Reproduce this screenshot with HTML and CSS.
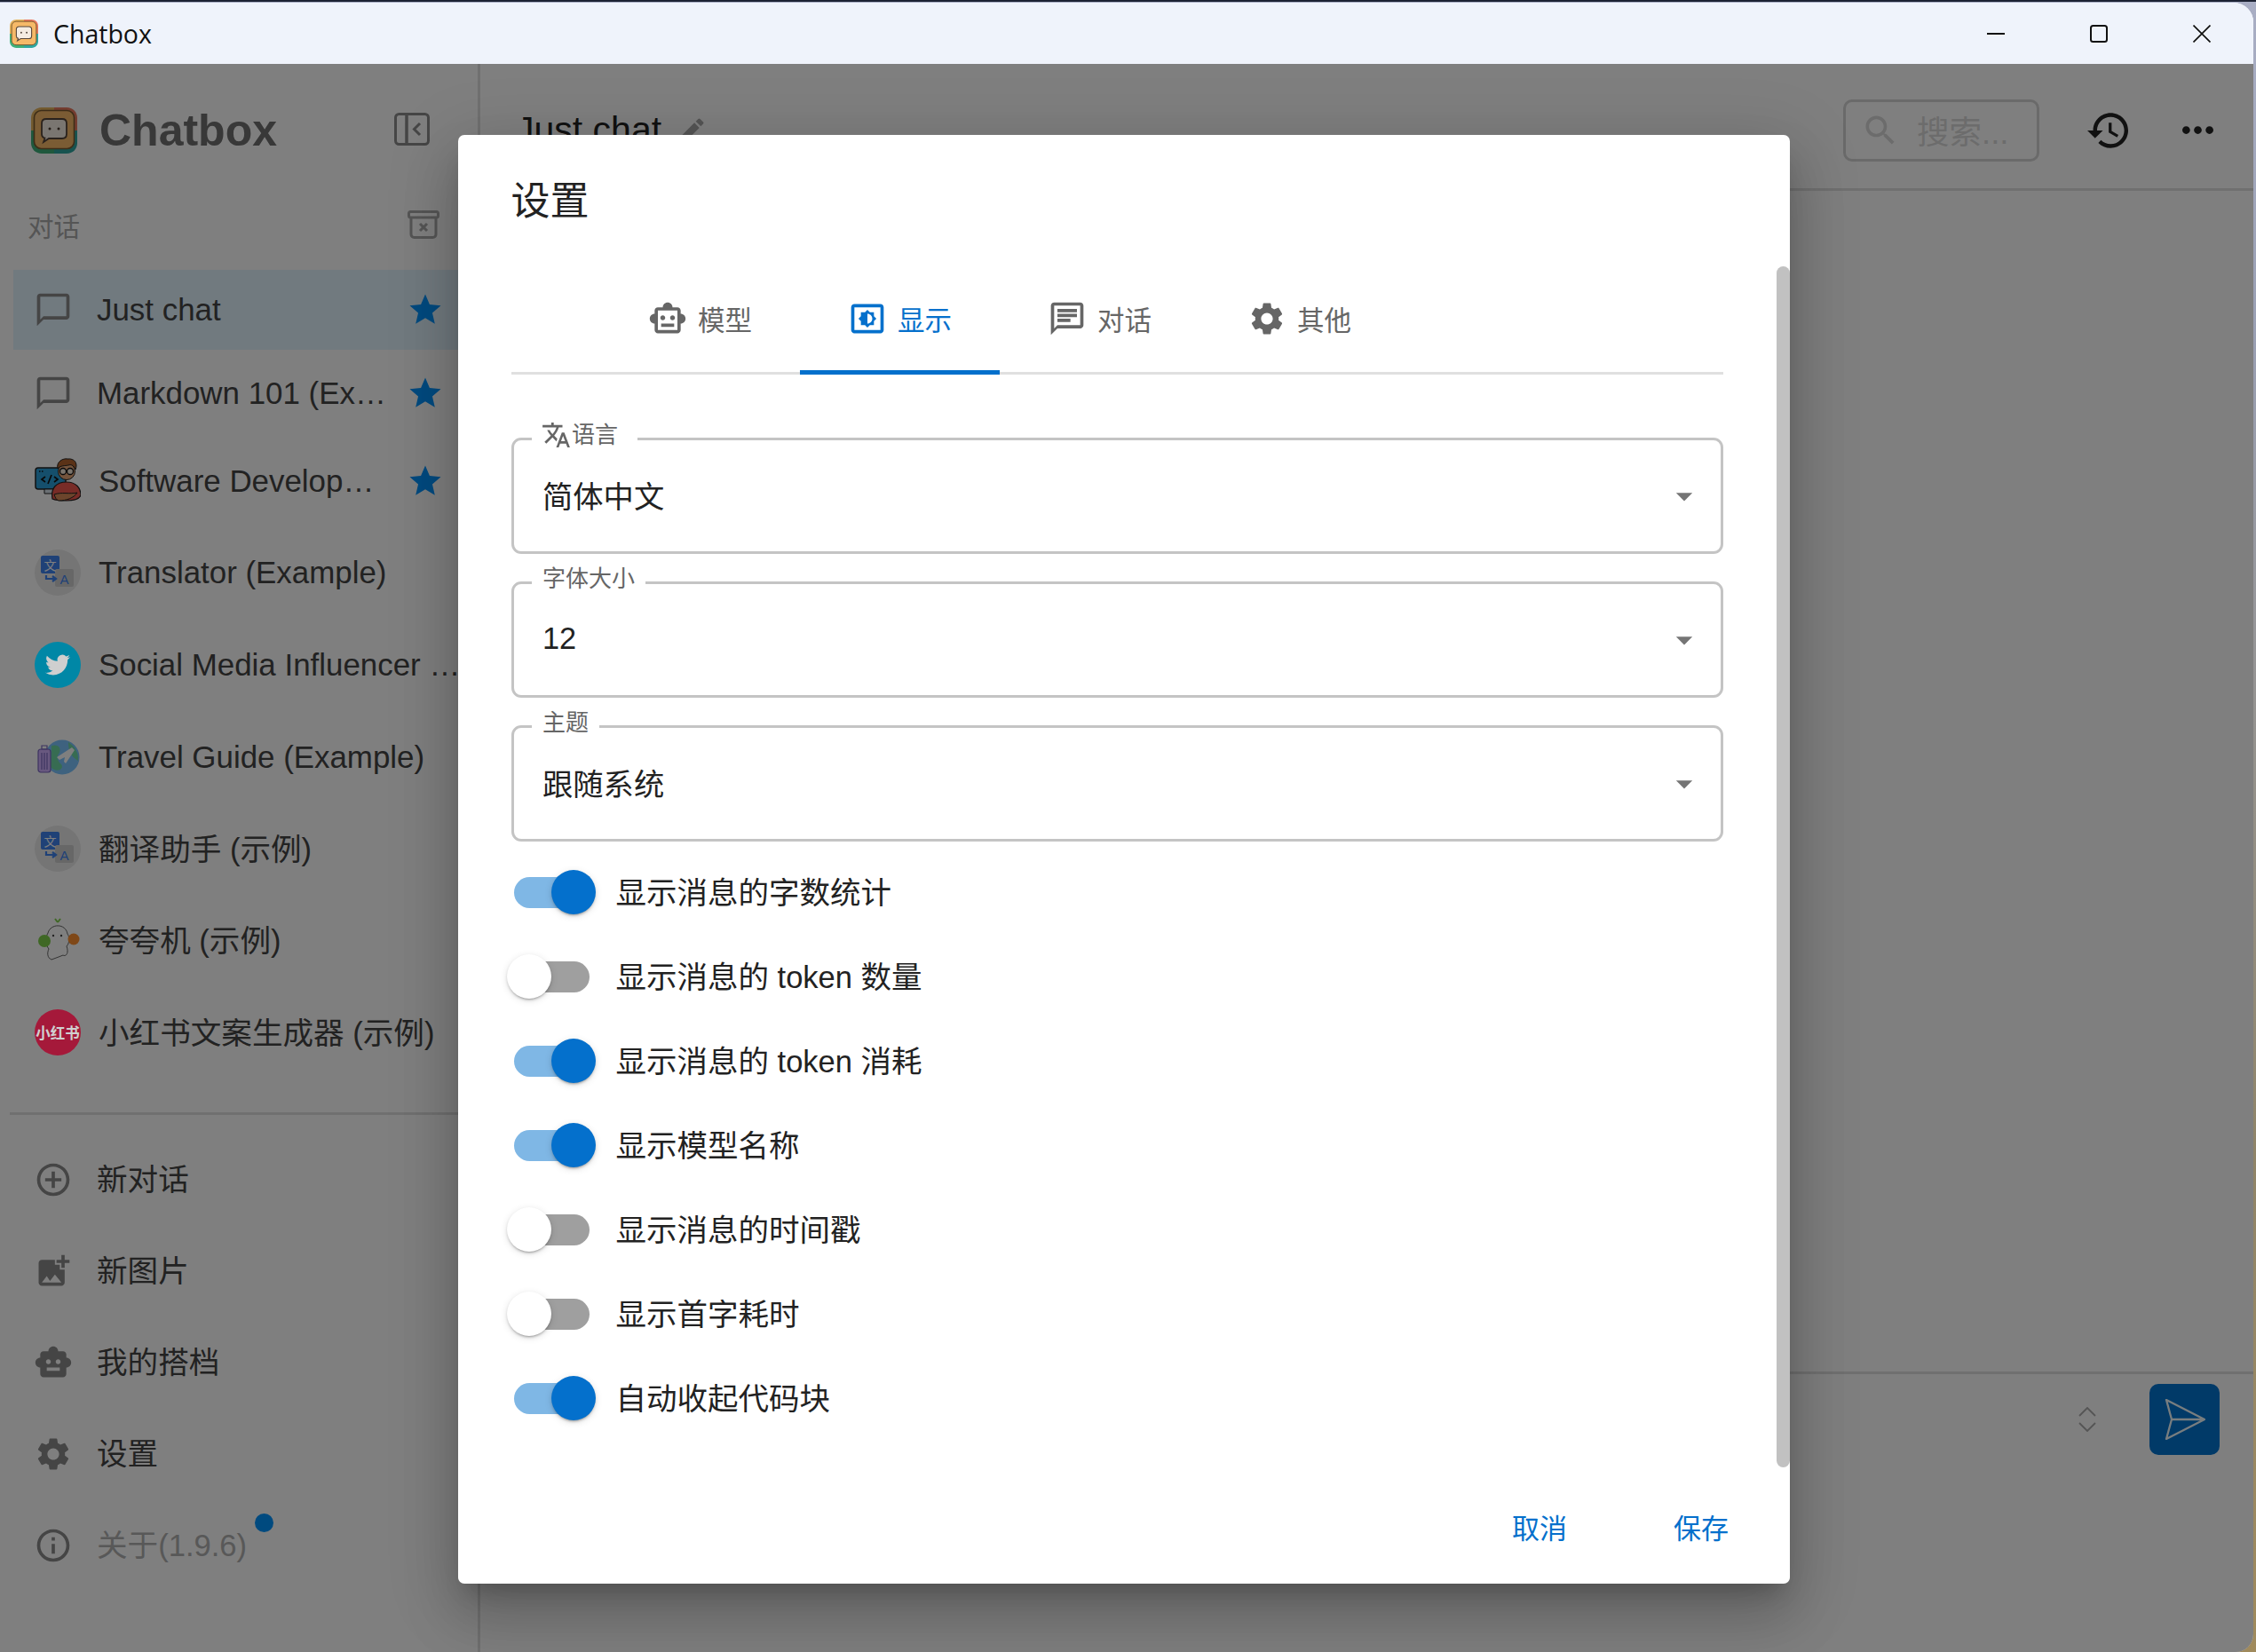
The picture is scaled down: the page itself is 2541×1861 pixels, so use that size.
FILE: index.html
```html
<!DOCTYPE html>
<html lang="zh-CN">
<head>
<meta charset="utf-8">
<title>Chatbox</title>
<link rel="stylesheet" href="styles.css">
</head>
<body>
<svg class="defs" width="0" height="0" aria-hidden="true">
  <symbol id="i-logo" viewBox="0 0 52 52">
    <path d="M26 0H12C5 0 0 5 0 12V26H26Z" fill="#e6b45e"/>
    <path d="M26 0H40C47 0 52 5 52 12V26H26Z" fill="#e8785f"/>
    <path d="M26 52H12C5 52 0 47 0 40V26H26Z" fill="#3fb07a"/>
    <path d="M26 52H40C47 52 52 47 52 40V26H26Z" fill="#2fa7a0"/>
    <rect x="3.500" y="3.500" width="45" height="43" rx="8" fill="#f6b968" stroke="#7a5a30" stroke-width="1.600"/>
    <path d="M17 13H35C38 13 40 15 40 18V30C40 33 38 35 35 35H20L14 39L15.500 34.500C13.500 34 12 32.500 12 30V18C12 15 14 13 17 13Z" fill="#f5ece2" stroke="#55453a" stroke-width="1.800"/>
    <circle cx="21" cy="24" r="1.500" fill="#4a3c32"/><circle cx="31" cy="24" r="1.500" fill="#4a3c32"/>
  </symbol>
  <symbol id="i-chat" viewBox="0 0 24 24"><path d="M20 2H4c-1.100 0-2 .9-2 2v18l4-4h14c1.100 0 2-.9 2-2V4c0-1.100-.9-2-2-2zm0 14H6l-2 2V4h16v12z"/></symbol>
  <symbol id="i-star" viewBox="0 0 24 24"><path d="M12 17.270L18.180 21l-1.640-7.030L22 9.240l-7.190-.61L12 2 9.190 8.630 2 9.240l5.460 4.730L5.820 21z"/></symbol>
  <symbol id="i-robot" viewBox="0 0 24 24"><path d="M20 9V7c0-1.100-.9-2-2-2h-3c0-1.660-1.340-3-3-3S9 3.340 9 5H6c-1.100 0-2 .9-2 2v2c-1.660 0-3 1.340-3 3s1.340 3 3 3v4c0 1.100.9 2 2 2h12c1.100 0 2-.9 2-2v-4c1.660 0 3-1.340 3-3s-1.340-3-3-3zM7.500 11.500c0-.83.67-1.500 1.500-1.500s1.500.67 1.500 1.500S9.830 13 9 13s-1.500-.67-1.500-1.500zM16 17H8v-2h8v2zm-1-4c-.83 0-1.500-.67-1.500-1.500S14.170 10 15 10s1.500.67 1.500 1.500S15.830 13 15 13z"/></symbol>
  <symbol id="i-gear" viewBox="0 0 24 24"><path d="M19.140 12.940c.04-.3.06-.61.06-.94 0-.32-.02-.64-.07-.94l2.030-1.580c.18-.14.23-.41.12-.61l-1.920-3.320c-.12-.22-.37-.29-.59-.22l-2.390.96c-.5-.38-1.030-.7-1.620-.94l-.36-2.540c-.04-.24-.24-.41-.48-.41h-3.840c-.24 0-.43.17-.47.41l-.36 2.540c-.59.24-1.130.57-1.620.94l-2.390-.96c-.22-.08-.47 0-.59.22L2.740 8.870c-.12.21-.08.47.12.61l2.030 1.580c-.05.3-.09.63-.09.94s.02.64.07.94l-2.030 1.580c-.18.14-.23.41-.12.61l1.920 3.320c.12.22.37.29.59.22l2.390-.96c.5.38 1.030.7 1.620.94l.36 2.540c.05.24.24.41.48.41h3.840c.24 0 .44-.17.47-.41l.36-2.540c.59-.24 1.130-.56 1.620-.94l2.390.96c.22.08.47 0 .59-.22l1.920-3.320c.12-.22.07-.47-.12-.61l-2.010-1.580zM12 15.600c-1.980 0-3.600-1.620-3.600-3.600s1.620-3.600 3.600-3.600 3.600 1.620 3.600 3.600-1.620 3.600-3.600 3.600z"/></symbol>
  <symbol id="i-arrow" viewBox="0 0 24 24"><path d="M7 10l5 5 5-5z"/></symbol>
  <symbol id="i-translator" viewBox="0 0 52 52">
    <circle cx="26" cy="26" r="26" fill="#eaeaea"/>
    <rect x="7" y="7" width="21" height="20" rx="2" fill="#3f83ee"/>
    <rect x="23" y="22" width="21" height="20" rx="2" fill="#cfcfcf"/>
    <text x="17.500" y="23" class="svg-zh">文</text>
    <text x="33.500" y="38.500" class="svg-a">A</text>
    <path d="M13 29V33H23M20 30L24 33L20 36" fill="none" stroke="#3f83ee" stroke-width="2.200"/>
  </symbol>
</svg>

<div class="window">
  <header class="titlebar">
    <svg class="titlebar-logo"><use href="#i-logo"/></svg>
    <span class="titlebar-name">Chatbox</span>
    <div class="win-controls">
      <span class="win-btn"><svg class="win-ico" viewBox="0 0 20 20"><path d="M0 10H20" stroke="#111" stroke-width="2"/></svg></span>
      <span class="win-btn"><svg class="win-ico" viewBox="0 0 20 20"><rect x="1" y="1" width="18" height="18" rx="2.500" fill="none" stroke="#111" stroke-width="2"/></svg></span>
      <span class="win-btn"><svg class="win-ico" viewBox="0 0 20 20"><path d="M.5 .5L19.500 19.500M19.500 .5L.5 19.500" stroke="#111" stroke-width="1.700"/></svg></span>
    </div>
  </header>

  <div class="app">
    <aside class="sidebar">
      <div class="brand">
        <svg class="brand-logo"><use href="#i-logo"/></svg>
        <h1 class="brand-name">Chatbox</h1>
        <svg class="collapse" viewBox="0 0 40 40" fill="none" stroke="#8c8c8c" stroke-width="3"><rect x="1.500" y="1.500" width="37" height="34" rx="4"/><path d="M14 1V36" stroke-width="3.500"/><path d="M29 12L22.500 18.500L29 25"/></svg>
      </div>
      <div class="section-head">
        <span class="section-title">对话</span>
        <svg class="archive" viewBox="0 0 36 32" fill="none" stroke="#aaa" stroke-width="3"><rect x="1.500" y="1.500" width="33" height="6.500" rx="2"/><path d="M4 8V27C4 29 5.500 30.500 7.500 30.500H28.500C30.500 30.500 32 29 32 27V8"/><path d="M14 15L22 23M22 15L14 23"/></svg>
      </div>
      <ul class="list">
        <li class="row row-chat row-selected">
          <svg class="glyph"><use href="#i-chat"/></svg>
          <span class="title">Just chat</span>
          <svg class="star"><use href="#i-star"/></svg>
        </li>
        <li class="row row-chat">
          <svg class="glyph"><use href="#i-chat"/></svg>
          <span class="title">Markdown 101 (Example)</span>
          <svg class="star"><use href="#i-star"/></svg>
        </li>
        <li class="row">
          <svg class="avatar" viewBox="0 0 52 52">
            <rect x="1" y="11" width="34" height="24" rx="3" fill="#2b9fd8" stroke="#222" stroke-width="1.500"/>
            <path d="M5 15H10" stroke="#111" stroke-width="1.500" stroke-dasharray="1.500 1.500"/>
            <path d="M12 21L8 24L12 27M22 21L26 24L22 27M19 19L15 29" fill="none" stroke="#111" stroke-width="1.700"/>
            <path d="M11 35H26V40H11Z" fill="#d8e2ea" stroke="#222"/>
            <circle cx="36" cy="15" r="9.500" fill="#e8a878" stroke="#222"/>
            <path d="M26 12C24 4 32 0 37 1C45 0 49 6 46 13C44 8 41 7 38 8C34 9 29 8 26 12Z" fill="#b5652e" stroke="#222"/>
            <circle cx="32" cy="15" r="3.500" fill="#f5e8d8" stroke="#111" stroke-width="1.300"/>
            <circle cx="40" cy="15" r="3.500" fill="#f5e8d8" stroke="#111" stroke-width="1.300"/>
            <path d="M20 46C18 34 24 27 36 27C47 27 52 34 52 42C50 47 44 48 36 48C30 48 24 48 20 46Z" fill="#f0584e" stroke="#222" stroke-width="1.200"/>
            <path d="M22 41C30 38 40 41 48 39C44 45 36 48 27 48C24 47 23 44 22 41Z" fill="#d88a58" stroke="#222"/>
          </svg>
          <span class="title">Software Developer (Example)</span>
          <svg class="star"><use href="#i-star"/></svg>
        </li>
        <li class="row"><svg class="avatar"><use href="#i-translator"/></svg><span class="title">Translator (Example)</span></li>
        <li class="row">
          <span class="avatar avatar-lit avatar-twitter">
            <svg class="bird" viewBox="0 0 24 24"><path d="M23.953 4.570a10 10 0 01-2.825.775 4.958 4.958 0 002.163-2.723c-.951.555-2.005.959-3.127 1.184a4.920 4.920 0 00-8.384 4.482C7.690 8.095 4.067 6.130 1.640 3.162a4.822 4.822 0 00-.666 2.475c0 1.710.870 3.213 2.188 4.096a4.904 4.904 0 01-2.228-.616v.06a4.923 4.923 0 003.946 4.827 4.996 4.996 0 01-2.212.085 4.936 4.936 0 004.604 3.417 9.867 9.867 0 01-6.102 2.105c-.39 0-.779-.023-1.170-.067a13.995 13.995 0 007.557 2.209c9.053 0 13.998-7.496 13.998-13.985 0-.21 0-.42-.015-.63A9.935 9.935 0 0024 4.590z"/></svg>
          </span>
          <span class="title">Social Media Influencer (Example)</span>
        </li>
        <li class="row">
          <svg class="avatar" viewBox="0 0 52 52">
            <circle cx="31" cy="26" r="19.500" fill="#7cc4ff"/>
            <path d="M19 13C27 11 30 15 28 21C24 25 26 31 30 34C34 40 24 44 18 37Z" fill="#6fd8a4"/>
            <path d="M38 9C44 13 50 20 49 30C45 27 38 24 38 9Z" fill="#6fd8a4"/>
            <path d="M25 26L42 15L45 18L35 33L33 31L34 26L28 29Z" fill="#fff"/>
            <rect x="4" y="17" width="14" height="26" rx="3" fill="#d0b0ff" stroke="#7a68c0" stroke-width="1.200"/>
            <path d="M8 13H14V17H8ZM8 21V40M11 21V40M14 21V40" fill="none" stroke="#7a68c0" stroke-width="1.200"/>
          </svg>
          <span class="title">Travel Guide (Example)</span>
        </li>
        <li class="row"><svg class="avatar"><use href="#i-translator"/></svg><span class="title title-cjk">翻译助手 (示例)</span></li>
        <li class="row">
          <svg class="avatar" viewBox="0 0 52 52">
            <path d="M15 17C18 6 35 6 37 18C40 22 39 29 36 32C39 40 35 44 32 42L27 44L19 47C14 45 14 39 16 35C12 30 12 22 15 17Z" fill="#fff" stroke="#555" stroke-width=".9"/>
            <circle cx="11" cy="26" r="7" fill="#7ed04a"/>
            <circle cx="44" cy="24" r="6.500" fill="#ff9030"/>
            <path d="M26 5L23 1M26 5L29 1" stroke="#7ed04a" stroke-width="2"/>
            <circle cx="21" cy="20" r="1.200" fill="#444"/><circle cx="30" cy="20" r="1.200" fill="#444"/>
          </svg>
          <span class="title title-cjk">夸夸机 (示例)</span>
        </li>
        <li class="row">
          <span class="avatar avatar-lit avatar-xhs">小红书</span>
          <span class="title title-cjk">小红书文案生成器 (示例)</span>
        </li>
      </ul>
      <nav class="menu">
        <a class="row menu-row"><svg class="glyph" viewBox="0 0 24 24"><path d="M13 7h-2v4H7v2h4v4h2v-4h4v-2h-4V7zm-1-5C6.480 2 2 6.480 2 12s4.480 10 10 10 10-4.480 10-10S17.520 2 12 2zm0 18c-4.410 0-8-3.590-8-8s3.590-8 8-8 8 3.590 8 8-3.590 8-8 8z"/></svg><span class="title title-cjk">新对话</span></a>
        <a class="row menu-row"><svg class="glyph" viewBox="0 0 24 24"><path d="M19 7v2.990s-1.990.01-2 0V7h-3s.01-1.990 0-2h3V2h2v3h3v2h-3zm-3 4V8h-3V5H5c-1.100 0-2 .9-2 2v12c0 1.100.9 2 2 2h12c1.100 0 2-.9 2-2v-8h-3zM5 19l3-4 2 3 3-4 4 5H5z"/></svg><span class="title title-cjk">新图片</span></a>
        <a class="row menu-row"><svg class="glyph"><use href="#i-robot"/></svg><span class="title title-cjk">我的搭档</span></a>
        <a class="row menu-row"><svg class="glyph"><use href="#i-gear"/></svg><span class="title title-cjk">设置</span></a>
        <a class="row menu-row menu-about"><svg class="glyph" viewBox="0 0 24 24"><path d="M11 7h2v2h-2zm0 4h2v6h-2zm1-9C6.480 2 2 6.480 2 12s4.480 10 10 10 10-4.480 10-10S17.520 2 12 2zm0 18c-4.410 0-8-3.590-8-8s3.590-8 8-8 8 3.590 8 8-3.590 8-8 8z"/></svg><span class="about-label">关于(1.9.6)<i class="dot"></i></span></a>
      </nav>
    </aside>

    <main class="main">
      <div class="top">
        <span class="chat-name">Just chat</span>
        <svg class="pencil" viewBox="0 0 24 24"><path d="M3 17.250V21h3.750L17.810 9.940l-3.750-3.750L3 17.250zM20.710 7.040c.39-.39.39-1.020 0-1.410l-2.340-2.340a.9959.9959 0 0 0-1.410 0l-1.830 1.830 3.750 3.750 1.830-1.830z"/></svg>
        <div class="search">
          <svg class="search-ico" viewBox="0 0 24 24"><path d="M15.500 14h-.79l-.28-.27C15.410 12.590 16 11.110 16 9.500 16 5.910 13.090 3 9.500 3S3 5.910 3 9.500 5.910 16 9.500 16c1.610 0 3.090-.59 4.230-1.570l.27.28v.79l5 4.990L20.490 19l-4.990-5zm-6 0C7.010 14 5 11.990 5 9.500S7.010 5 9.500 5 14 7.010 14 9.500 11.990 14 9.500 14z"/></svg>
          <span>搜索...</span>
        </div>
        <svg class="history" viewBox="1 3 21 18"><path d="M13 3c-4.970 0-9 4.030-9 9H1l3.890 3.890.07.14L9 12H6c0-3.870 3.130-7 7-7s7 3.130 7 7-3.130 7-7 7c-1.930 0-3.680-.79-4.940-2.060l-1.420 1.420C8.270 19.990 10.510 21 13 21c4.970 0 9-4.030 9-9s-4.030-9-9-9zm-1 5v5l4.280 2.540.72-1.210-3.500-2.080V8H12z"/></svg>
        <svg class="more" viewBox="4 10 16 4"><path d="M6 10c-1.100 0-2 .9-2 2s.9 2 2 2 2-.9 2-2-.9-2-2-2zm12 0c-1.100 0-2 .9-2 2s.9 2 2 2 2-.9 2-2-.9-2-2-2zm-6 0c-1.100 0-2 .9-2 2s.9 2 2 2 2-.9 2-2-.9-2-2-2z"/></svg>
      </div>
      <div class="messages"></div>
      <div class="composer">
        <svg class="unfold" viewBox="0 0 20 28" fill="none" stroke="#aaa" stroke-width="1.800"><path d="M1 10L10 1L19 10M1 18L10 27L19 18"/></svg>
        <button class="send" type="button">
          <svg class="send-ico" viewBox="0 0 46 46" fill="none" stroke="#f0fbff" stroke-width="2.300" stroke-linejoin="round"><path d="M2 1L45 23L2 45L8 23ZM8 23H45"/></svg>
        </button>
      </div>
    </main>

    <div class="scrim"></div>

    <section class="dialog" role="dialog" aria-label="设置">
      <h2 class="dialog-title">设置</h2>
      <div class="dialog-body">
        <div class="scrollbar"></div>
        <div class="tabs">
          <div class="tab"><svg class="tab-ico" viewBox="-1 0 24 24"><path d="M19 9V7c0-1.100-.9-2-2-2h-3c0-1.660-1.340-3-3-3S8 3.340 8 5H5c-1.100 0-2 .9-2 2v2c-1.660 0-3 1.340-3 3s1.340 3 3 3v4c0 1.100.9 2 2 2h12c1.100 0 2-.9 2-2v-4c1.660 0 3-1.340 3-3s-1.340-3-3-3zm-2 10H5V7h12v12zm-9-6c-.83 0-1.500-.67-1.500-1.500S7.170 10 8 10s1.500.67 1.500 1.500S8.830 13 8 13zm7.500-1.500c0 .83-.67 1.500-1.500 1.500s-1.500-.67-1.500-1.500S13.170 10 14 10s1.500.67 1.500 1.500zM7 15h8v2H7v-2z"/></svg><span>模型</span></div>
          <div class="tab tab-active"><svg class="tab-ico" viewBox="0 0 24 24"><path d="M20 3H4c-1.110 0-2 .89-2 2v14c0 1.110.89 2 2 2h16c1.110 0 2-.89 2-2V5c0-1.110-.89-2-2-2zm0 16.010H4V4.990h16v14.020zM8 16h2.500l1.500 1.500 1.500-1.500H16v-2.500l1.500-1.500-1.500-1.500V8h-2.500L12 6.500 10.500 8H8v2.500L6.500 12 8 13.500V16zm4-7c1.660 0 3 1.340 3 3s-1.340 3-3 3V9z"/></svg><span>显示</span></div>
          <div class="tab"><svg class="tab-ico" viewBox="0 0 24 24"><path d="M20 2H4c-1.100 0-2 .9-2 2v18l4-4h14c1.100 0 2-.9 2-2V4c0-1.100-.9-2-2-2zm0 14H6l-2 2V4h16v12zM6 12h8v2H6zM6 9h12v2H6zM6 6h12v2H6z"/></svg><span>对话</span></div>
          <div class="tab"><svg class="tab-ico"><use href="#i-gear"/></svg><span>其他</span></div>
        </div>

        <div class="fields">
          <div class="field">
            <span class="field-label field-label-icon"><svg class="label-ico" viewBox="1 2 22 20"><path d="M12.870 15.070l-2.540-2.510.03-.03c1.740-1.940 2.980-4.170 3.710-6.530H17V4h-7V2H8v2H1v1.990h11.170C11.500 7.920 10.440 9.750 9 11.350 8.070 10.320 7.300 9.190 6.690 8h-2c.73 1.630 1.730 3.170 2.980 4.560l-5.090 5.020L4 19l5-5 3.110 3.110.76-2.040zM18.500 10h-2L12 22h2l1.120-3h4.750L21 22h2l-4.500-12zm-2.620 7l1.620-4.330L19.120 17h-3.240z"/></svg>语言</span>
            <span class="field-value">简体中文</span>
            <svg class="field-arrow"><use href="#i-arrow"/></svg>
          </div>
          <div class="field">
            <span class="field-label">字体大小</span>
            <span class="field-value">12</span>
            <svg class="field-arrow"><use href="#i-arrow"/></svg>
          </div>
          <div class="field">
            <span class="field-label">主题</span>
            <span class="field-value">跟随系统</span>
            <svg class="field-arrow"><use href="#i-arrow"/></svg>
          </div>
        </div>

        <div class="toggles">
          <label class="toggle is-on"><span class="switch"><span class="track"></span><span class="thumb"></span></span><span class="toggle-text">显示消息的字数统计</span></label>
          <label class="toggle"><span class="switch"><span class="track"></span><span class="thumb"></span></span><span class="toggle-text">显示消息的 token 数量</span></label>
          <label class="toggle is-on"><span class="switch"><span class="track"></span><span class="thumb"></span></span><span class="toggle-text">显示消息的 token 消耗</span></label>
          <label class="toggle is-on"><span class="switch"><span class="track"></span><span class="thumb"></span></span><span class="toggle-text">显示模型名称</span></label>
          <label class="toggle"><span class="switch"><span class="track"></span><span class="thumb"></span></span><span class="toggle-text">显示消息的时间戳</span></label>
          <label class="toggle"><span class="switch"><span class="track"></span><span class="thumb"></span></span><span class="toggle-text">显示首字耗时</span></label>
          <label class="toggle is-on"><span class="switch"><span class="track"></span><span class="thumb"></span></span><span class="toggle-text">自动收起代码块</span></label>
        </div>
      </div>
      <div class="dialog-actions">
        <button class="text-btn" type="button">取消</button>
        <button class="text-btn" type="button">保存</button>
      </div>
    </section>
  </div>
</div>
</body>
</html>
```
FILE: styles.css
```css
* { box-sizing: border-box; }
html, body { margin: 0; height: 100%; }
body {
  width: 2541px;
  height: 1861px;
  overflow: hidden;
  padding: 3px 3px 0 0;
  background: linear-gradient(180deg, #a9aec4 0, #9aa0b4 20%, #8f8468 70%, #a08a5c 100%);
  border-top: 2px solid #1c2233;
  font-family: "Liberation Sans", "Noto Sans CJK SC", sans-serif;
  color: #222;
}
.defs { position: absolute; }
.svg-zh { font: 14px "Noto Sans CJK SC", sans-serif; fill: #fff; text-anchor: middle; }
.svg-a { font: 15px "Liberation Sans", sans-serif; fill: #3f83ee; text-anchor: middle; }

.window {
  height: 1858px;
  margin-top: -2px;
  display: flex;
  flex-direction: column;
  overflow: hidden;
  border-radius: 0 22px 20px 0;
  background: #fff;
}

/* title bar */
.titlebar {
  height: 69px;
  flex: none;
  display: flex;
  align-items: center;
  background: #eff3fb;
  padding-left: 11px;
}
.titlebar-logo { width: 32px; height: 32px; }
.titlebar-name { margin-left: 17px; font: 28.500px "Open Sans", sans-serif; color: #111; }
.win-controls { margin-left: auto; display: flex; }
.win-btn { width: 116px; height: 69px; display: flex; align-items: center; justify-content: center; }
.win-ico { width: 20px; height: 20px; }

/* app */
.app { position: relative; flex: 1; display: flex; min-height: 0; }
.scrim { position: absolute; inset: 0; background: rgba(0, 0, 0, .5); z-index: 1; }

/* sidebar */
.sidebar { width: 541px; flex: none; border-right: 3px solid #e0e0e0; overflow: hidden; }
.brand { display: flex; align-items: center; height: 52px; margin-top: 49px; padding-left: 35px; }
.brand-logo { width: 52px; height: 52px; }
.brand-name { margin: 0 0 0 25px; width: 200px; font-size: 50px; font-weight: 700; color: #707070; line-height: 52px; }
.collapse { width: 40px; height: 40px; margin-left: 132px; }
.section-head { display: flex; align-items: center; justify-content: space-between; height: 60px; margin-top: 50px; padding: 0 43px 0 31px; }
.section-title { font-size: 29.500px; color: #aaa; }
.archive { width: 36px; height: 32px; }

.list { list-style: none; margin: 19px 0 0; padding: 0; }
.row { display: flex; align-items: center; height: 103.600px; margin-left: 15px; padding: 0 17px 0 24px; font-size: 34.900px; color: #444; }
.row-chat { height: 94px; }
.row-selected { background: #e2f4ff; background-clip: content-box; padding: 2px 0 2px 0; }
.row-selected .glyph { margin-left: 23px; }
.row-selected .star { margin-right: 38px; }
.glyph { width: 44px; height: 44px; flex: none; margin: 0 27px 0 -1px; fill: #8a8a8a; }
.avatar { width: 52px; height: 52px; flex: none; margin-right: 20px; }
.avatar-lit { position: relative; z-index: 2; border-radius: 50%; display: flex; align-items: center; justify-content: center; }
.avatar-twitter { background: #0087a6; }
.bird { width: 28px; height: 28px; fill: #cfcfcf; }
.avatar-xhs { background: #a5193a; color: #d0d0d0; font-size: 16.500px; font-weight: 700; white-space: nowrap; }
.title { flex: 1; min-width: 0; white-space: nowrap; overflow: hidden; text-overflow: ellipsis; }
.title-cjk { font-size: 34.600px; padding-bottom: 5px; }
.star { width: 42px; height: 42px; flex: none; margin: 0 21px 0 22px; fill: #0094ff; }

.menu { margin: 38px 0 0 11px; padding-top: 21px; border-top: 3px solid #e0e0e0; }
.menu-row { height: 103px; margin-left: 4px; }
.about-label { position: relative; color: #b0b0b0; font-size: 34.600px; padding-bottom: 5px; }
.dot { position: absolute; left: 178px; top: -8px; width: 21px; height: 21px; border-radius: 50%; background: #0094ff; }

/* main */
.main { flex: 1; min-width: 0; display: flex; flex-direction: column; }
.top { height: 143px; flex: none; display: flex; align-items: center; padding: 9px 45px 0 40px; border-bottom: 3px solid #e0e0e0; }
.chat-name { font-size: 41px; color: #222; }
.pencil { width: 36px; height: 36px; margin-left: 16px; fill: #aaa; }
.search { margin-left: auto; width: 221px; height: 70px; display: flex; align-items: center; padding-left: 17px; border: 3px solid #d4d4d4; border-radius: 10px; font-size: 36.500px; color: #d8d8d8; white-space: nowrap; }
.search-ico { width: 44px; height: 44px; fill: #d8d8d8; margin-right: 19px; flex: none; }
.history { width: 46px; height: 40px; margin-left: 54px; fill: #222; }
.more { width: 35px; height: 9px; margin-left: 61px; fill: #222; }
.messages { flex: 1; }
.composer { height: 316px; flex: none; display: flex; align-items: flex-start; justify-content: flex-end; padding: 11px 38px 0 0; border-top: 3px solid #e0e0e0; }
.unfold { width: 20px; height: 28px; margin: 26px 60px 0 0; }
.send { width: 79px; height: 80px; padding: 0; border: 0; border-radius: 10px; background: #0274d0; display: flex; align-items: center; justify-content: center; }
.send-ico { width: 46px; height: 46px; }

/* dialog */
.dialog {
  position: absolute;
  z-index: 2;
  left: 516px;
  top: 80px;
  width: 1500px;
  height: 1632px;
  display: flex;
  flex-direction: column;
  background: #fff;
  border-radius: 7px;
  box-shadow: 0 18px 24px -11px rgba(0, 0, 0, .2), 0 39px 62px 5px rgba(0, 0, 0, .14), 0 15px 75px 13px rgba(0, 0, 0, .12);
}
.dialog-title { margin: 0; height: 148px; flex: none; padding-left: 59.500px; font-size: 44px; font-weight: 400; line-height: 150px; color: #222; }
.dialog-body { position: relative; flex: 1; min-height: 0; padding: 0 75px 0 60px; }
.scrollbar { position: absolute; top: 0; right: 0; bottom: 0; width: 15px; border-radius: 8px; background: #c1c1c1; }

.tabs { display: flex; height: 122px; padding-left: 100px; border-bottom: 3px solid #e0e0e0; }
.tab { position: relative; width: 225px; display: flex; align-items: center; justify-content: center; gap: 12px; padding-bottom: 2px; font-size: 30.500px; color: #666; }
.tab-ico { width: 44px; height: 44px; fill: #666; flex: none; }
.tab-active { color: #0470cc; }
.tab-active .tab-ico { fill: #0470cc; }
.tab-active::after { content: ""; position: absolute; left: 0; right: 0; bottom: -3px; height: 5px; background: #0470cc; }

.fields { margin-top: 71px; display: flex; flex-direction: column; gap: 31px; }
.field { position: relative; height: 131px; display: flex; align-items: center; justify-content: space-between; padding: 0 19px 3px 32px; border: 3px solid #c4c4c4; border-radius: 11px; }
.field-label { position: absolute; left: 20px; top: -22px; padding: 0 12px; display: flex; align-items: center; background: #fff; font-size: 26px; line-height: 32px; color: #666; }
.field-label-icon { padding-right: 22px; }
.label-ico { width: 31px; height: 28px; margin-right: 2px; fill: #666; }
.field-value { font-size: 34.300px; color: #222; }
.field-arrow { width: 44px; height: 44px; margin-bottom: -3px; fill: #757575; }

.toggles { margin: 9.500px 0 0 -5px; }
.toggle { height: 95px; display: flex; align-items: center; gap: 22.500px; font-size: 34.500px; color: #222; }
.toggle-text { padding-bottom: 5px; }
.switch { position: relative; width: 100px; height: 50px; flex: none; display: flex; align-items: center; }
.track { width: 85px; height: 35px; margin-left: 8px; border-radius: 18px; background: #9f9f9f; }
.thumb { position: absolute; left: 0; top: 0; width: 50px; height: 50px; border-radius: 50%; background: #fff; box-shadow: 0 3px 2px -2px rgba(0, 0, 0, .2), 0 2px 3px 0 rgba(0, 0, 0, .14), 0 2px 8px 0 rgba(0, 0, 0, .12); }
.is-on .track { background: #7fb7e5; }
.is-on .thumb { left: 50px; background: #0470cc; }

.dialog-actions { height: 131px; flex: none; display: flex; align-items: center; justify-content: flex-end; gap: 120px; padding: 1px 69px 0 0; }
.text-btn { padding: 0; border: 0; background: none; font: 31px "Liberation Sans", "Noto Sans CJK SC", sans-serif; color: #0470cc; }
```
